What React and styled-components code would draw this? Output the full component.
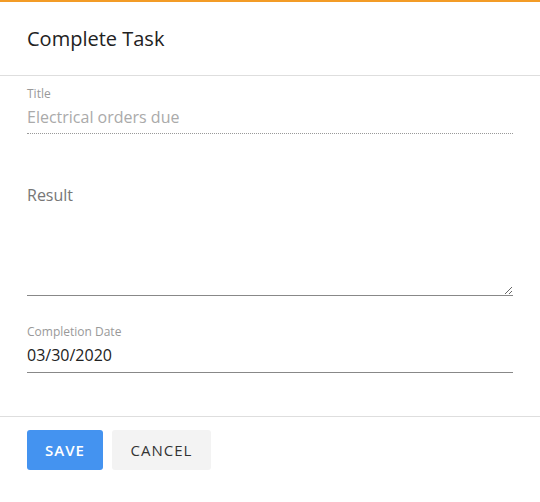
import React from 'react';
import styled, { createGlobalStyle } from 'styled-components';

const GlobalStyle = createGlobalStyle`
  body {
    margin: 0;
    background: #fff;
    font-family: "Open Sans", "Liberation Sans", sans-serif;
  }
`;

const Dialog = () => {
  return (
    <Panel>
      <GlobalStyle />
      <Header>
        <Heading>Complete Task</Heading>
      </Header>
      <Body>
        <Label>Title</Label>
        <Input value="Electrical orders due" disabled readOnly dotted />
        <TextArea placeholder="Result" />
        <Label top="28px">Completion Date</Label>
        <Input defaultValue="03/30/2020" dark />
      </Body>
      <Footer>
        <SaveButton>Save</SaveButton>
        <CancelButton>Cancel</CancelButton>
      </Footer>
    </Panel>
  );
};

const Panel = styled.div`
  width: 540px;
  height: 502px;
  border-top: 2px solid #f39c26;
  box-sizing: border-box;
  background: #fff;
`;

const Header = styled.div`
  height: 73px;
  display: flex;
  align-items: center;
  padding: 0 27px;
  border-bottom: 1px solid #dedede;
`;

const Heading = styled.h2`
  margin: 0;
  font-size: 20px;
  font-weight: 400;
  color: #222;
`;

const Body = styled.div`
  padding: 10px 27px 43px;
  display: flex;
  flex-direction: column;
`;

const Label = styled.label`
  display: block;
  font-size: 12px;
  line-height: 16px;
  color: #999;
  margin-top: ${p => p.top || '0'};
`;

const Input = styled.input`
  display: block;
  width: 100%;
  box-sizing: border-box;
  border: none;
  border-bottom: 1px ${p => (p.dotted ? 'dotted #999' : 'solid #888')};
  padding: ${p => (p.dotted ? '3px 0 4px' : '3px 0 5px')};
  font-family: inherit;
  font-size: 16px;
  line-height: 24px;
  height: ${p => (p.dotted ? '32px' : '33px')};
  color: ${p => (p.dark ? '#222' : '#aaa')};
  background: transparent;
  outline: none;
  &:disabled {
    color: #aaa;
    -webkit-text-fill-color: #aaa;
    opacity: 1;
  }
`;

const TextArea = styled.textarea`
  display: block;
  margin-top: 41px;
  width: 100%;
  height: 121px;
  box-sizing: border-box;
  border: none;
  border-bottom: 1px solid #888;
  padding: 8px 0 0;
  font-family: inherit;
  font-size: 16px;
  line-height: 24px;
  color: #222;
  resize: vertical;
  outline: none;
  &::placeholder {
    color: #777;
  }
`;

const Footer = styled.div`
  border-top: 1px solid #dedede;
  padding: 13px 27px;
  display: flex;
  gap: 9px;
`;

const Button = styled.button`
  height: 40px;
  border: none;
  border-radius: 3px;
  font-family: inherit;
  font-size: 15px;
  letter-spacing: 1px;
  text-transform: uppercase;
  cursor: pointer;
`;

const SaveButton = styled(Button)`
  width: 76px;
  background: #4493f0;
  color: #fff;
  font-weight: 600;
`;

const CancelButton = styled(Button)`
  width: 99px;
  background: #f3f3f3;
  color: #333;
`;

export default Dialog;
